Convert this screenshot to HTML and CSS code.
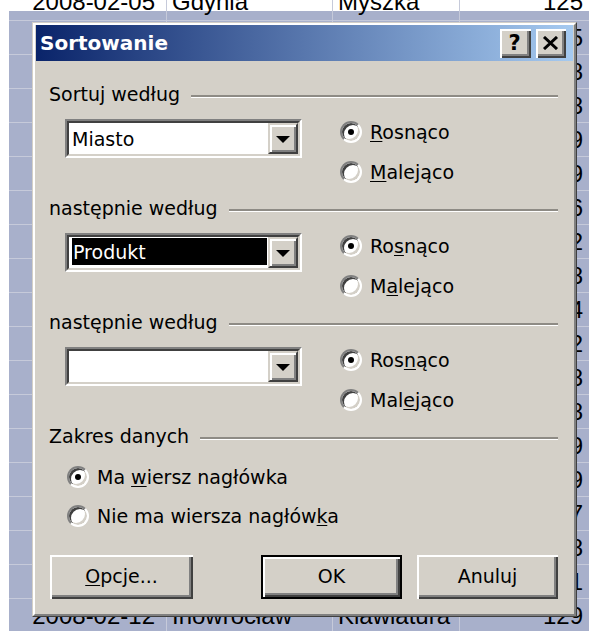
FILE: index.html
```html
<!DOCTYPE html>
<html lang="pl">
<head>
<meta charset="utf-8">
<title>Sortowanie</title>
<link rel="stylesheet" href="styles.css">
</head>
<body>
<div class="sheet">
  <div class="row first"><div class="cell date">2008-02-05</div><div class="cell city">Gdynia</div><div class="cell item">Myszka</div><div class="cell num">125</div></div>
  <div class="row"><div class="cell date">2008-02-05</div><div class="cell city">Gdańsk</div><div class="cell item">Monitor</div><div class="cell num">145</div></div>
  <div class="row"><div class="cell date">2008-02-06</div><div class="cell city">Sopot</div><div class="cell item">Drukarka</div><div class="cell num">98</div></div>
  <div class="row"><div class="cell date">2008-02-06</div><div class="cell city">Toruń</div><div class="cell item">Skaner</div><div class="cell num">118</div></div>
  <div class="row"><div class="cell date">2008-02-07</div><div class="cell city">Poznań</div><div class="cell item">Myszka</div><div class="cell num">129</div></div>
  <div class="row"><div class="cell date">2008-02-07</div><div class="cell city">Kraków</div><div class="cell item">Monitor</div><div class="cell num">89</div></div>
  <div class="row"><div class="cell date">2008-02-08</div><div class="cell city">Kielce</div><div class="cell item">Głośniki</div><div class="cell num">156</div></div>
  <div class="row"><div class="cell date">2008-02-08</div><div class="cell city">Lublin</div><div class="cell item">Drukarka</div><div class="cell num">132</div></div>
  <div class="row"><div class="cell date">2008-02-08</div><div class="cell city">Opole</div><div class="cell item">Skaner</div><div class="cell num">108</div></div>
  <div class="row"><div class="cell date">2008-02-09</div><div class="cell city">Radom</div><div class="cell item">Myszka</div><div class="cell num">124</div></div>
  <div class="row"><div class="cell date">2008-02-09</div><div class="cell city">Płock</div><div class="cell item">Monitor</div><div class="cell num">112</div></div>
  <div class="row"><div class="cell date">2008-02-10</div><div class="cell city">Łódź</div><div class="cell item">Klawiatura</div><div class="cell num">138</div></div>
  <div class="row"><div class="cell date">2008-02-10</div><div class="cell city">Elbląg</div><div class="cell item">Drukarka</div><div class="cell num">148</div></div>
  <div class="row"><div class="cell date">2008-02-10</div><div class="cell city">Kalisz</div><div class="cell item">Skaner</div><div class="cell num">99</div></div>
  <div class="row"><div class="cell date">2008-02-11</div><div class="cell city">Legnica</div><div class="cell item">Głośniki</div><div class="cell num">119</div></div>
  <div class="row"><div class="cell date">2008-02-11</div><div class="cell city">Tarnów</div><div class="cell item">Myszka</div><div class="cell num">117</div></div>
  <div class="row"><div class="cell date">2008-02-11</div><div class="cell city">Chełm</div><div class="cell item">Monitor</div><div class="cell num">128</div></div>
  <div class="row"><div class="cell date">2008-02-12</div><div class="cell city">Gniezno</div><div class="cell item">Drukarka</div><div class="cell num">141</div></div>
  <div class="row"><div class="cell date">2008-02-12</div><div class="cell city">Inowrocław</div><div class="cell item">Klawiatura</div><div class="cell num">129</div></div>
</div>

<div class="dialog">
  <div class="frame">
    <div class="titlebar">
      <span class="title">Sortowanie</span>
      <div class="caption-btns">
        <div class="cap-btn help">?</div>
        <div class="cap-btn close">
          <svg width="17" height="14" viewBox="0 0 17 14"><path d="M2 1 L15 13 M15 1 L2 13" stroke="#000" stroke-width="3" fill="none"/></svg>
        </div>
      </div>
    </div>

    <div class="content">
      <div class="group">
        <div class="group-head"><span class="group-label">Sortuj według</span><span class="rule"></span></div>
        <div class="group-body">
          <div class="combo"><div class="field"><span class="value">Miasto</span><span class="drop"><svg width="14" height="7" viewBox="0 0 14 7"><path d="M0 0 H14 L7 7 Z" fill="#000"/></svg></span></div></div>
          <div class="radios">
            <div class="opt"><span class="radio checked"></span><span><u>R</u>osnąco</span></div>
            <div class="opt"><span class="radio"></span><span><u>M</u>alejąco</span></div>
          </div>
        </div>
      </div>

      <div class="group">
        <div class="group-head"><span class="group-label">następnie według</span><span class="rule"></span></div>
        <div class="group-body">
          <div class="combo"><div class="field"><span class="value selected">Produkt</span><span class="drop"><svg width="14" height="7" viewBox="0 0 14 7"><path d="M0 0 H14 L7 7 Z" fill="#000"/></svg></span></div></div>
          <div class="radios">
            <div class="opt"><span class="radio checked"></span><span>Ro<u>s</u>nąco</span></div>
            <div class="opt"><span class="radio"></span><span>M<u>a</u>lejąco</span></div>
          </div>
        </div>
      </div>

      <div class="group">
        <div class="group-head"><span class="group-label">następnie według</span><span class="rule"></span></div>
        <div class="group-body">
          <div class="combo"><div class="field"><span class="value"></span><span class="drop"><svg width="14" height="7" viewBox="0 0 14 7"><path d="M0 0 H14 L7 7 Z" fill="#000"/></svg></span></div></div>
          <div class="radios">
            <div class="opt"><span class="radio checked"></span><span>Ros<u>n</u>ąco</span></div>
            <div class="opt"><span class="radio"></span><span>Mal<u>e</u>jąco</span></div>
          </div>
        </div>
      </div>

      <div class="group">
        <div class="group-head"><span class="group-label">Zakres danych</span><span class="rule"></span></div>
        <div class="range">
          <div class="opt"><span class="radio checked"></span><span>Ma <u>w</u>iersz nagłówka</span></div>
          <div class="opt"><span class="radio"></span><span>Nie ma wiersza nagłów<u>k</u>a</span></div>
        </div>
      </div>

      <div class="buttons">
        <div class="btn"><span><u>O</u>pcje...</span></div>
        <div class="btn default">OK</div>
        <div class="btn">Anuluj</div>
      </div>
    </div>
  </div>
</div>
</body>
</html>
```

FILE: styles.css
```css
html, body {
  margin: 0;
  padding: 0;
  background: #fff;
  overflow: hidden;
}

body {
  width: 589px;
  height: 631px;
  position: relative;
}

/* worksheet behind the dialog */
.sheet {
  margin-left: 9px;
  margin-top: -13px;
  background: #a8b0cb;
  font-family: "Liberation Sans", Arial, sans-serif;
  font-size: 24px;
  color: #000;
}

.row {
  display: grid;
  grid-template-columns: 158px 166px 127px 1fr;
  height: 34px;
  box-sizing: border-box;
  border-bottom: 1px solid #c6cada;
}

.row.first {
  background: linear-gradient(#fff 24px, transparent 24px);
}

.cell {
  line-height: 33px;
  white-space: nowrap;
  overflow: hidden;
  border-right: 1px solid #c6cada;
}

.row.first .cell {
  line-height: 29px;
}

.cell.date { text-align: right; padding-right: 11px; }
.cell.city { padding-left: 5px; }
.cell.item { padding-left: 5px; }
.cell.num { text-align: right; padding-right: 6px; border-right: none; }

/* dialog window */
.dialog {
  position: absolute;
  left: 32px;
  top: 22px;
  width: 545px;
  height: 595px;
  box-sizing: border-box;
  border: 1px solid;
  border-color: #d4d0c8 #404040 #404040 #d4d0c8;
  background: #d4d0c8;
  font-family: "DejaVu Sans", Verdana, sans-serif;
  font-size: 19px;
  color: #000;
}

.frame {
  height: 100%;
  box-sizing: border-box;
  border: 2px solid;
  border-color: #fff #808080 #808080 #fff;
  padding: 0 1px 1px 1px;
  display: flex;
  flex-direction: column;
}

.titlebar {
  height: 36px;
  flex: none;
  display: flex;
  align-items: center;
  padding: 0 7px 0 4px;
  background: linear-gradient(to right, #0a246a, #a6caf0);
}

.title {
  color: #fff;
  font-weight: bold;
  font-size: 20px;
  flex: 1;
}

.caption-btns {
  display: flex;
  gap: 5px;
  margin-top: 1px;
}

.cap-btn {
  width: 31px;
  height: 29px;
  box-sizing: border-box;
  background: #d4d0c8;
  box-shadow: inset 2px 2px #fff, inset -2px -2px #404040, inset -4px -4px #808080;
  display: flex;
  align-items: center;
  justify-content: center;
}

.cap-btn.help {
  font-weight: bold;
  font-size: 21px;
  padding: 0 2px 1px 0;
}

.cap-btn.close {
  width: 30px;
  padding: 0 2px 1px 0;
}

.content {
  flex: 1;
  padding: 21px 15px 0 13px;
}

.group-head {
  display: flex;
  align-items: center;
  height: 24px;
}

.rule {
  flex: 1;
  margin-left: 11px;
  margin-top: 4px;
  border-top: 2px solid #8e8b85;
  border-bottom: 1px solid #fff;
}

.group-body {
  display: flex;
  height: 77px;
  margin-top: 13px;
  padding-left: 16px;
}

/* combo box */
.combo {
  width: 237px;
  height: 39px;
  box-sizing: border-box;
  border: 2px solid;
  border-color: #808080 #fff #fff #808080;
}

.field {
  height: 100%;
  box-sizing: border-box;
  border: 2px solid;
  border-color: #404040 #d4d0c8 #d4d0c8 #404040;
  background: #fff;
  display: flex;
}

.value {
  flex: 1;
  display: flex;
  align-items: center;
  padding-left: 3px;
  white-space: nowrap;
}

.value.selected {
  background: #000;
  color: #fff;
  margin: 1px 1px 3px 3px;
  padding-left: 1px;
}

.drop {
  width: 30px;
  flex: none;
  box-sizing: border-box;
  border: 2px solid;
  border-color: #d4d0c8 #404040 #404040 #d4d0c8;
  box-shadow: inset 2px 2px #fff, inset -2px -2px #808080;
  background: #d4d0c8;
  display: flex;
  align-items: center;
  justify-content: center;
  padding-top: 2px;
}

/* radio buttons */
.radios {
  margin-left: 38px;
  margin-top: 1px;
  display: flex;
  flex-direction: column;
  gap: 16px;
}

.opt {
  display: flex;
  align-items: center;
  height: 24px;
  white-space: nowrap;
}

.radio {
  width: 22px;
  height: 22px;
  flex: none;
  box-sizing: border-box;
  border-radius: 50%;
  border: 2px solid;
  border-color: #808080 #fff #fff #808080;
  background: #fff;
  box-shadow: inset 2px 2px 0 #404040, inset -2px -2px 0 #d4d0c8;
  margin-right: 8px;
  position: relative;
}

.radio.checked::after {
  content: "";
  position: absolute;
  left: 6px;
  top: 6px;
  width: 6px;
  height: 6px;
  border-radius: 50%;
  background: #000;
}

u {
  text-decoration: underline;
  text-underline-offset: 2px;
  text-decoration-thickness: 1px;
}

.range {
  margin-top: 17px;
  padding-left: 18px;
  display: flex;
  flex-direction: column;
  gap: 15px;
}

/* push buttons */
.buttons {
  display: flex;
  margin-top: 27px;
  padding-left: 1px;
}

.btn {
  width: 143px;
  height: 44px;
  box-sizing: border-box;
  background: #d4d0c8;
  box-shadow: inset 2px 2px #fff, inset -2px -2px #404040, inset -4px -4px #808080;
  display: flex;
  align-items: center;
  justify-content: center;
  padding-bottom: 2px;
}

.btn.default {
  width: 141px;
  margin-left: 68px;
  margin-right: 15px;
  border: 2px solid #000;
}

.btn:last-child {
  width: 141px;
}
```
